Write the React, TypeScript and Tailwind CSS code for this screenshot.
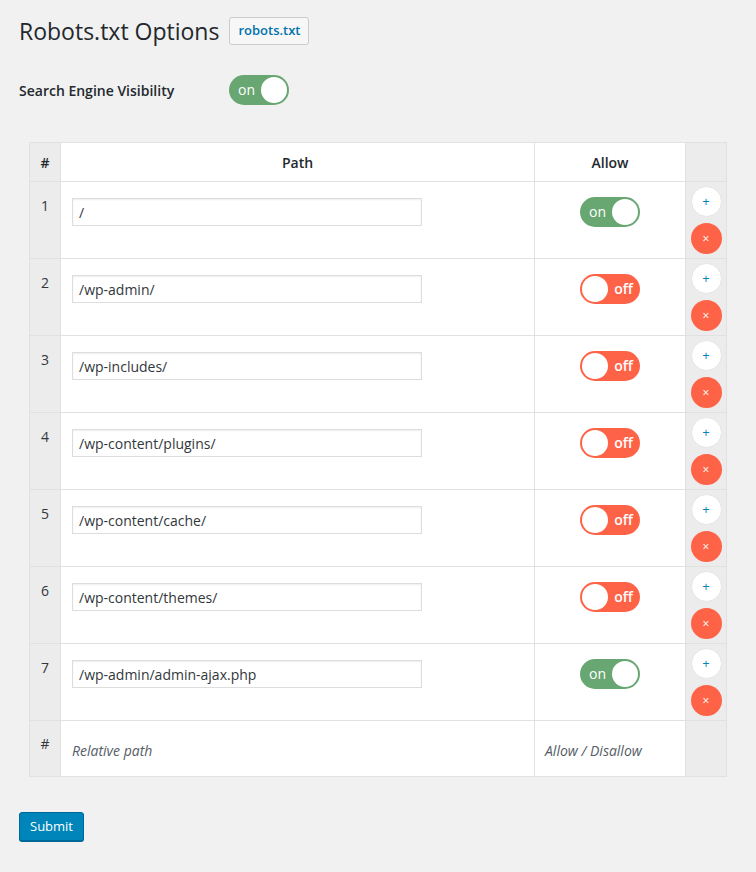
import React from 'react';

const rows: { path: string; allow: boolean }[] = [
  { path: '/', allow: true },
  { path: '/wp-admin/', allow: false },
  { path: '/wp-includes/', allow: false },
  { path: '/wp-content/plugins/', allow: false },
  { path: '/wp-content/cache/', allow: false },
  { path: '/wp-content/themes/', allow: false },
  { path: '/wp-admin/admin-ajax.php', allow: true },
];

const Toggle: React.FC<{ on: boolean }> = ({ on }) => (
  <div
    className={
      on
        ? 'flex h-[30px] w-[60px] items-center justify-between rounded-full bg-[#68a672] pl-[9px] pr-[2px]'
        : 'flex h-[30px] w-[60px] items-center justify-between rounded-full bg-[#ff6347] pl-[2px] pr-[7px]'
    }
  >
    {on ? (
      <>
        <span className="text-[14px] leading-none text-white">on</span>
        <span className="h-[26px] w-[26px] rounded-full bg-white" />
      </>
    ) : (
      <>
        <span className="h-[26px] w-[26px] rounded-full bg-white" />
        <span className="text-[14px] font-semibold leading-none text-white">off</span>
      </>
    )}
  </div>
);

export default function App() {
  return (
    <div className="min-h-[872px] bg-[#f1f1f1] px-[19px] pt-[14px] text-[#23282d]" style={{ fontFamily: '"Open Sans", "Liberation Sans", sans-serif' }}>
      {/* Title */}
      <div className="flex items-center gap-[10px]">
        <h1 className="text-[23px] font-normal leading-[34px]">Robots.txt Options</h1>
        <button className="h-[28px] rounded-[3px] border border-[#cccccc] bg-[#f7f7f7] px-[8px] text-[13px] font-semibold text-[#0073aa]">
          robots.txt
        </button>
      </div>

      {/* Visibility */}
      <div className="mt-[27px] flex items-center">
        <span className="w-[210px] text-[14px] font-semibold">Search Engine Visibility</span>
        <Toggle on />
      </div>

      {/* Table */}
      <table className="ml-[10px] mt-[37px] w-[697px] table-fixed border-collapse border border-[#e1e1e1] bg-white text-[14px]">
        <colgroup>
          <col className="w-[31px]" />
          <col className="w-[474px]" />
          <col className="w-[151px]" />
          <col className="w-[41px]" />
        </colgroup>
        <thead>
          <tr className="h-[39px]">
            <th className="border border-[#e1e1e1] bg-[#ececec] text-center font-semibold">#</th>
            <th className="border border-[#e1e1e1] text-center font-semibold">Path</th>
            <th className="border border-[#e1e1e1] text-center font-semibold">Allow</th>
            <th className="border border-[#e1e1e1] bg-[#ececec]" />
          </tr>
        </thead>
        <tbody>
          {rows.map((r, i) => (
            <tr key={i} className="h-[77px]">
              <td className="border border-[#e1e1e1] bg-[#ececec] pt-[13px] text-center align-top text-[#32373c]">{i + 1}</td>
              <td className="border border-[#e1e1e1] pl-[11px] pr-[10px] pt-[16px] align-top">
                <input
                  readOnly
                  value={r.path}
                  className="h-[28px] w-[350px] border border-[#dddddd] px-[6px] text-[14px] text-[#32373c] shadow-[inset_0_1px_2px_rgba(0,0,0,0.07)] outline-none"
                />
              </td>
              <td className="border border-[#e1e1e1] pt-[15px] align-top">
                <div className="flex justify-center">
                  <Toggle on={r.allow} />
                </div>
              </td>
              <td className="border border-[#e1e1e1] bg-[#ececec] pt-[4px] align-top">
                <div className="flex flex-col items-center gap-[6px]">
                  <button className="flex h-[31px] w-[31px] items-center justify-center rounded-full border border-[#e5e5e5] bg-white text-[13px] text-[#0085ba]">
                    +
                  </button>
                  <button className="flex h-[31px] w-[31px] items-center justify-center rounded-full bg-[#ff6347] text-[12px] text-white">
                    ×
                  </button>
                </div>
              </td>
            </tr>
          ))}
          <tr className="h-[56px]">
            <td className="border border-[#e1e1e1] bg-[#ececec] pt-[12px] text-center align-top text-[#32373c]">#</td>
            <td className="border border-[#e1e1e1] pl-[11px] pr-[10px] pt-[4px] italic text-[#555d66]">Relative path</td>
            <td className="border border-[#e1e1e1] px-[10px] pt-[4px] italic text-[#555d66]">Allow / Disallow</td>
            <td className="border border-[#e1e1e1] bg-[#ececec]" />
          </tr>
        </tbody>
      </table>

      <button className="mt-[35px] h-[29px] rounded-[3px] border border-[#006799] bg-[#0085ba] px-[10px] text-[13px] text-white shadow-[0_1px_0_#006799]">
        Submit
      </button>
    </div>
  );
}
